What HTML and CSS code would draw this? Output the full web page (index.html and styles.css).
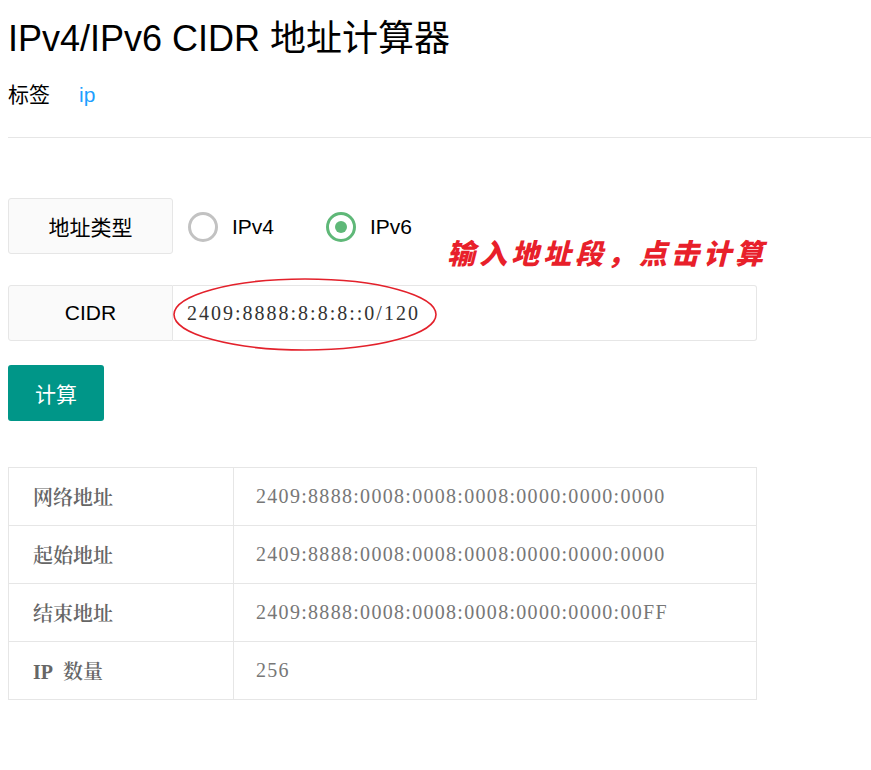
FILE: index.html
```html
<!DOCTYPE html>
<html lang="zh-CN">
<head>
<meta charset="utf-8">
<title>IPv4/IPv6 CIDR 地址计算器</title>
<link rel="stylesheet" href="styles.css">
</head>
<body>
<div class="page">
  <h1 class="title">IPv4/IPv6 CIDR 地址计算器</h1>
  <div class="tags"><span class="tags-label">标签</span><a class="tag" href="#">ip</a></div>
  <hr class="divider">

  <div class="form">
    <div class="form-item">
      <div class="form-label">地址类型</div>
      <div class="radios">
        <label class="radio"><span class="radio-icon"></span><span>IPv4</span></label>
        <label class="radio checked"><span class="radio-icon"></span><span>IPv6</span></label>
      </div>
      <div class="note">输入地址段，点击计算</div>
    </div>

    <div class="form-item cidr">
      <div class="form-label">CIDR</div>
      <div class="input">2409:8888:8:8:8::0/120</div>
      <svg class="ellipse" width="266" height="75" viewBox="0 0 266 75"><ellipse cx="133" cy="37.5" rx="131" ry="35.5" fill="none" stroke="#e3212b" stroke-width="1.6"/></svg>
    </div>

    <button class="btn" type="button">计算</button>
  </div>

  <table class="result">
    <tr><th>网络地址</th><td>2409:8888:0008:0008:0008:0000:0000:0000</td></tr>
    <tr><th>起始地址</th><td>2409:8888:0008:0008:0008:0000:0000:0000</td></tr>
    <tr><th>结束地址</th><td>2409:8888:0008:0008:0008:0000:0000:00FF</td></tr>
    <tr><th>IP&nbsp; 数量</th><td>256</td></tr>
  </table>
</div>
</body>
</html>
```

FILE: styles.css
```css
html, body {
  margin: 0;
  padding: 0;
  background: #fff;
}
body {
  font-family: "Liberation Sans", Arial, "Noto Sans CJK SC", sans-serif;
  color: #000;
}
.page {
  padding-left: 8px;
}
.title {
  font-size: 36px;
  font-weight: normal;
  line-height: 46px;
  margin: 16px 0 0;
  padding: 0;
}
.tags {
  margin-top: 20px;
  font-size: 21px;
  line-height: 26px;
  display: flex;
  gap: 29px;
}
.tag {
  color: #1e9fff;
  text-decoration: none;
}
.divider {
  border: none;
  border-top: 1px solid #e6e6e6;
  margin: 29px 0 0;
  height: 0;
}
.form {
  margin-top: 60px;
  width: 749px;
}
.form-item {
  position: relative;
  display: flex;
  height: 56px;
  margin-bottom: 31px;
}
.form-label {
  box-sizing: border-box;
  width: 165px;
  height: 56px;
  background: #fafafa;
  border: 1px solid #e6e6e6;
  border-radius: 3px 0 0 3px;
  display: flex;
  align-items: center;
  justify-content: center;
  font-size: 21px;
  color: #000;
}
.form-item:first-child .form-label {
  border-radius: 3px;
}
.radios {
  display: flex;
  align-items: center;
  padding-left: 15px;
  gap: 52px;
  font-size: 21px;
  height: 58px;
}
.radio {
  display: flex;
  align-items: center;
  gap: 14px;
}
.radio-icon {
  box-sizing: border-box;
  width: 30px;
  height: 30px;
  border: 3px solid #c2c2c2;
  border-radius: 50%;
  position: relative;
}
.radio.checked .radio-icon {
  border-color: #5fb878;
}
.radio.checked .radio-icon::after {
  content: "";
  position: absolute;
  left: 50%;
  top: 50%;
  width: 12px;
  height: 12px;
  margin: -6px 0 0 -6px;
  border-radius: 50%;
  background: #5fb878;
}
.note {
  position: absolute;
  left: 439px;
  top: 34px;
  font-family: "Noto Sans CJK SC", sans-serif;
  font-weight: 900;
  font-style: italic;
  font-size: 28px;
  letter-spacing: 4px;
  color: #e8202a;
  white-space: nowrap;
}
.input {
  box-sizing: border-box;
  flex: 1;
  height: 56px;
  border: 1px solid #e6e6e6;
  border-left: none;
  border-radius: 0 3px 3px 0;
  display: flex;
  align-items: center;
  padding-left: 14px;
  font-family: "Liberation Serif", "Noto Sans CJK SC", serif;
  font-size: 20px;
  letter-spacing: 2px;
  color: #333;
}
.ellipse {
  position: absolute;
  left: 164px;
  top: -8px;
}
.btn {
  display: block;
  width: 96px;
  height: 56px;
  border: none;
  border-radius: 3px;
  background: #009688;
  color: #fff;
  font-family: "Noto Sans CJK SC", sans-serif;
  font-size: 21px;
  padding: 0;
  margin-top: -7px;
}
.result {
  margin-top: 46px;
  border-collapse: collapse;
  width: 749px;
}
.result th, .result td {
  border: 1px solid #e6e6e6;
  height: 57px;
  padding: 0;
  text-align: left;
  font-size: 20px;
  color: #666;
  font-family: "Liberation Serif", "Noto Serif CJK SC", "Noto Sans CJK SC", serif;
}
.result th {
  width: 200px;
  padding-left: 24px;
  font-weight: 600;
}
.result td {
  padding-left: 22px;
  letter-spacing: 1.3px;
  color: #777;
}
```
